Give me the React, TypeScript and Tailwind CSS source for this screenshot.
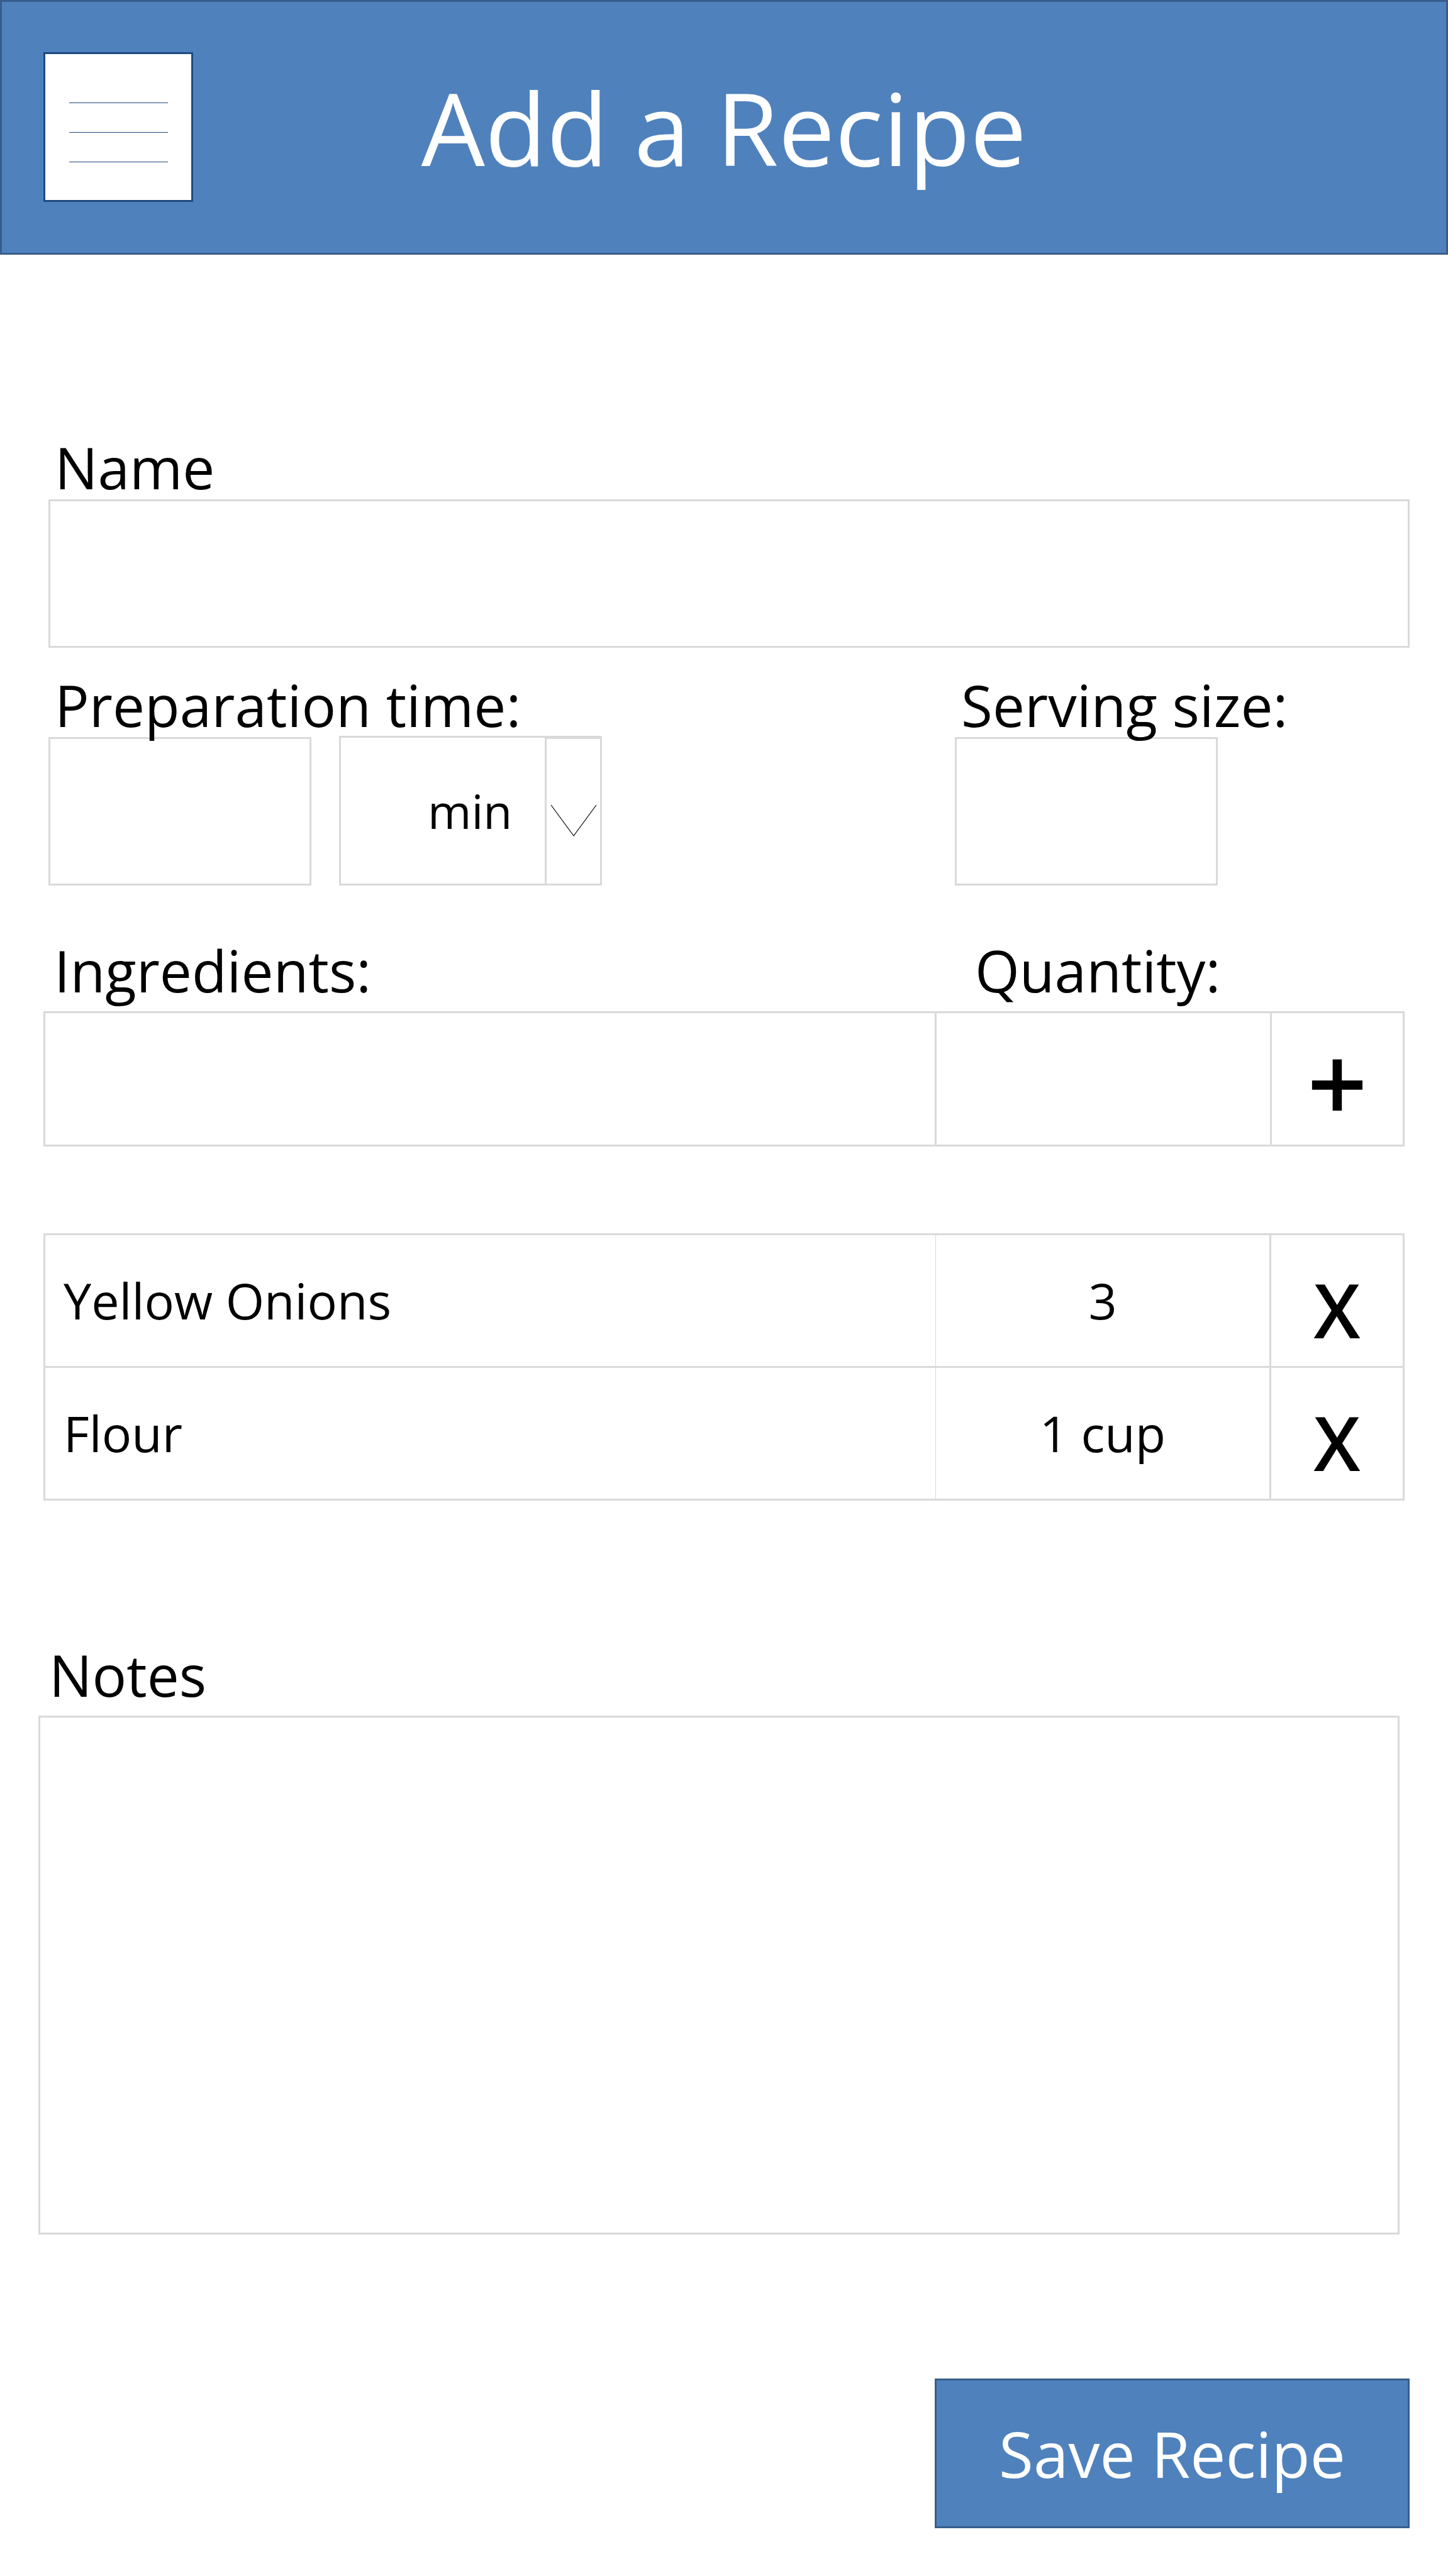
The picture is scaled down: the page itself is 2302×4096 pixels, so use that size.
import { useId, useState } from "react";
import type { ReactNode } from "react";

type Ingredient = { name: string; quantity: string };

const fieldClass =
  "block rounded-none border-[3px] border-[#d9d9d9] bg-transparent px-7 text-[79px] outline-none";

function FieldLabel({ htmlFor, className = "", children }: { htmlFor: string; className?: string; children: ReactNode }) {
  return (
    <label htmlFor={htmlFor} className={`relative z-10 block text-[91px] leading-[102px] ${className}`}>
      {children}
    </label>
  );
}

function Header() {
  return (
    <header className="grid h-[405px] grid-cols-[1fr_auto_1fr] items-center border-[3px] border-[#385d8a] bg-[#4f81bd] px-[66px] pb-[2px]">
      <button
        type="button"
        aria-label="Open menu"
        className="flex h-[238px] w-[238px] flex-col items-center justify-center gap-[46px] border-[3px] border-[#1f497d] bg-white pt-[17px]"
      >
        <span className="h-px w-[157px] bg-[#1f497d]" />
        <span className="h-px w-[157px] bg-[#1f497d]" />
        <span className="h-px w-[157px] bg-[#1f497d]" />
      </button>
      <h1 className="text-[160px] leading-[216px] text-white">Add a Recipe</h1>
    </header>
  );
}

function TimeUnitSelect() {
  return (
    <div className="relative">
      <select
        aria-label="Preparation time unit"
        defaultValue="min"
        className="block h-[238px] w-[418px] appearance-none rounded-none border-[3px] border-[#d9d9d9] bg-transparent pl-[138px] text-[75px] outline-none"
      >
        <option value="min">min</option>
        <option value="hrs">hrs</option>
      </select>
      <div className="pointer-events-none absolute top-[2px] right-0 bottom-0 flex w-[91px] items-center justify-center border-[3px] border-[#d9d9d9] pt-[30px]">
        <svg width="74" height="52" viewBox="0 0 74 52" fill="none" stroke="#000" strokeWidth="1.2" aria-hidden="true">
          <path d="M1 1 L37 50 L73 1" />
        </svg>
      </div>
    </div>
  );
}

export default function App() {
  const id = useId();
  const [items, setItems] = useState<Ingredient[]>([
    { name: "Yellow Onions", quantity: "3" },
    { name: "Flour", quantity: "1 cup" },
  ]);
  const [name, setName] = useState("");
  const [quantity, setQuantity] = useState("");

  const addItem = () => {
    if (!name) return;
    setItems([...items, { name, quantity }]);
    setName("");
    setQuantity("");
  };

  return (
    <div className="min-h-screen bg-white font-['Open_Sans','Noto_Sans',sans-serif] text-black">
      <Header />
      <form className="pt-[287px] pb-[76px]" onSubmit={(e) => e.preventDefault()}>
        <section className="pr-[61px] pl-[77px]">
          <FieldLabel htmlFor={`${id}-name`} className="pl-[10px]">Name</FieldLabel>
          <input id={`${id}-name`} type="text" className={`${fieldClass} h-[236px] w-full`} />
        </section>

        <section className="mt-10 grid grid-cols-[1fr_723px] pr-[61px] pl-[77px]">
          <div>
            <FieldLabel htmlFor={`${id}-time`} className="pl-[10px]">Preparation time:</FieldLabel>
            <div className="-mt-[2px] flex items-end gap-[44px]">
              <input id={`${id}-time`} type="text" className={`${fieldClass} h-[236px] w-[418px]`} />
              <TimeUnitSelect />
            </div>
          </div>
          <div>
            <FieldLabel htmlFor={`${id}-serving`} className="pl-[10px]">Serving size:</FieldLabel>
            <input id={`${id}-serving`} type="text" className={`${fieldClass} h-[236px] w-[418px]`} />
          </div>
        </section>

        <section className="mt-[84px] px-[69px]">
          <div className="mb-[14px] grid grid-cols-[1fr_683px]">
            <FieldLabel htmlFor={`${id}-ingredient`} className="pl-[17px]">Ingredients:</FieldLabel>
            <FieldLabel htmlFor={`${id}-quantity`}>Quantity:</FieldLabel>
          </div>
          <div className="grid h-[215px] grid-cols-[1fr_533px_211px] border-[3px] border-[#d9d9d9]">
            <input
              id={`${id}-ingredient`}
              type="text"
              value={name}
              onChange={(e) => setName(e.target.value)}
              className="min-w-0 px-7 text-[79px] outline-none"
            />
            <input
              id={`${id}-quantity`}
              type="text"
              value={quantity}
              onChange={(e) => setQuantity(e.target.value)}
              className="min-w-0 border-l-[3px] border-[#d9d9d9] text-center text-[79px] outline-none"
            />
            <button
              type="button"
              aria-label="Add ingredient"
              onClick={addItem}
              className="flex items-center justify-center border-l-[3px] border-[#d9d9d9] pt-2 text-[168px] leading-none font-semibold"
            >
              +
            </button>
          </div>

          <table className="mt-[138px] w-full table-fixed border-collapse border-[3px] border-[#d9d9d9] text-[79px]">
            <colgroup>
              <col />
              <col className="w-[532px]" />
              <col className="w-[212px]" />
            </colgroup>
            <tbody>
              {items.map((item, i) => (
                <tr key={i} className="h-[211px] border-b-[3px] border-[#d9d9d9]">
                  <td className="p-0 pl-[29px]">{item.name}</td>
                  <td className="border-l border-[#d9d9d9] p-0 text-center">{item.quantity}</td>
                  <td className="border-l-[3px] border-[#d9d9d9] p-0">
                    <button
                      type="button"
                      aria-label={`Remove ${item.name}`}
                      onClick={() => setItems(items.filter((_, n) => n !== i))}
                      className="flex w-full items-center justify-center pt-7 text-[119px] leading-[120px] font-semibold"
                    >
                      X
                    </button>
                  </td>
                </tr>
              ))}
            </tbody>
          </table>
        </section>

        <section className="mt-[226px] pr-[77px] pl-[61px]">
          <FieldLabel htmlFor={`${id}-notes`} className="mb-[14px] pl-[17px]">Notes</FieldLabel>
          <textarea id={`${id}-notes`} className={`${fieldClass} h-[825px] w-full resize-none py-5`} />
        </section>

        <div className="mt-[229px] flex justify-end pr-[61px]">
          <button
            type="submit"
            className="h-[238px] w-[755px] border-[3px] border-[#385d8a] bg-[#4f81bd] text-[100px] leading-[136px] text-white"
          >
            Save Recipe
          </button>
        </div>
      </form>
    </div>
  );
}
